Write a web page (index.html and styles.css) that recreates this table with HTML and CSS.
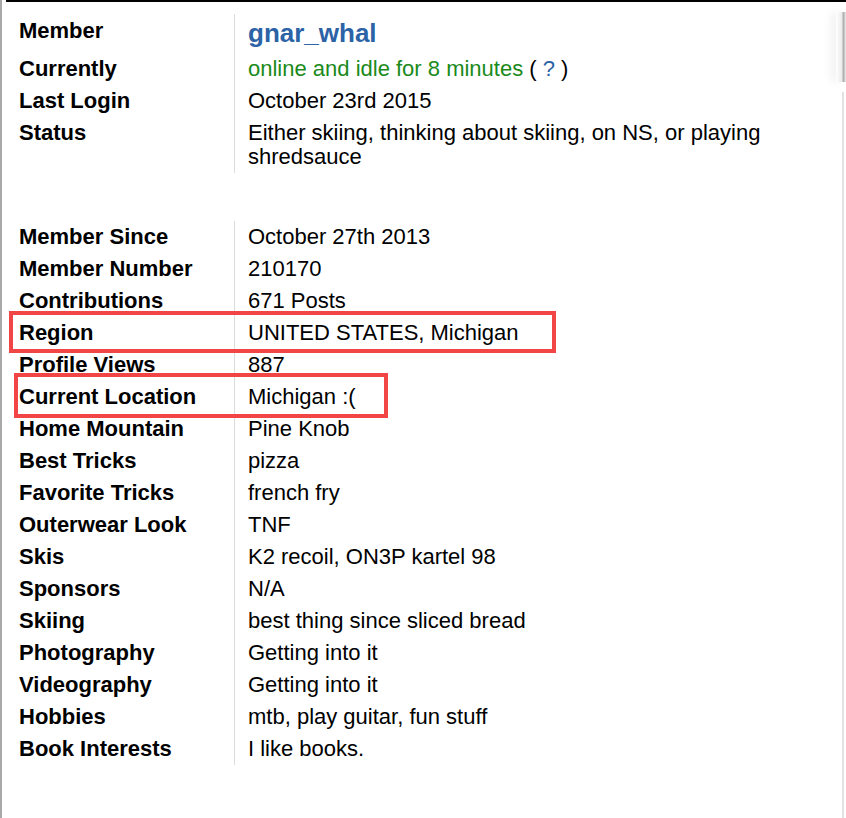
FILE: index.html
```html
<!DOCTYPE html>
<html>
<head>
<meta charset="utf-8">
<link rel="stylesheet" href="styles.css">
</head>
<body>
<div class="page">
  <div class="topbar"></div>
  <div class="profile">
    <table class="info">
      <tr class="member-row">
        <td class="label">Member</td>
        <td class="value"><a class="username">gnar_whal</a></td>
      </tr>
      <tr>
        <td class="label">Currently</td>
        <td class="value"><span class="online">online and idle for 8 minutes</span> ( <a class="help">?</a> )</td>
      </tr>
      <tr>
        <td class="label">Last Login</td>
        <td class="value">October 23rd 2015</td>
      </tr>
      <tr>
        <td class="label">Status</td>
        <td class="value">Either skiing, thinking about skiing, on NS, or playing<br>shredsauce</td>
      </tr>
    </table>
    <table class="info details">
      <tr><td class="label">Member Since</td><td class="value">October 27th 2013</td></tr>
      <tr><td class="label">Member Number</td><td class="value">210170</td></tr>
      <tr><td class="label">Contributions</td><td class="value">671 Posts</td></tr>
      <tr><td class="label">Region</td><td class="value">UNITED STATES, Michigan</td></tr>
      <tr><td class="label">Profile Views</td><td class="value">887</td></tr>
      <tr><td class="label">Current Location</td><td class="value">Michigan :(</td></tr>
      <tr><td class="label">Home Mountain</td><td class="value">Pine Knob</td></tr>
      <tr><td class="label">Best Tricks</td><td class="value">pizza</td></tr>
      <tr><td class="label">Favorite Tricks</td><td class="value">french fry</td></tr>
      <tr><td class="label">Outerwear Look</td><td class="value">TNF</td></tr>
      <tr><td class="label">Skis</td><td class="value">K2 recoil, ON3P kartel 98</td></tr>
      <tr><td class="label">Sponsors</td><td class="value">N/A</td></tr>
      <tr><td class="label">Skiing</td><td class="value">best thing since sliced bread</td></tr>
      <tr><td class="label">Photography</td><td class="value">Getting into it</td></tr>
      <tr><td class="label">Videography</td><td class="value">Getting into it</td></tr>
      <tr><td class="label">Hobbies</td><td class="value">mtb, play guitar, fun stuff</td></tr>
      <tr><td class="label">Book Interests</td><td class="value">I like books.</td></tr>
    </table>
  </div>
  <div class="highlight highlight-region"></div>
  <div class="highlight highlight-location"></div>
  <div class="edge-tab"></div>
  <div class="edge-line"></div>
</div>
</body>
</html>
```

FILE: styles.css
```css
html, body {
  margin: 0;
  padding: 0;
  background: #fff;
}

.page {
  position: relative;
  height: 818px;
  overflow: hidden;
  border-left: 2px solid #a9a9a9;
  font-family: "Liberation Sans", Arial, Helvetica, sans-serif;
  font-size: 22px;
  color: #000;
}

.topbar {
  height: 2px;
  margin-left: 4px;
  background: #000;
}

.profile {
  padding-top: 12px;
}

.info {
  border-collapse: collapse;
  border-spacing: 0;
}

.info td {
  padding: 4px 0;
  line-height: 24px;
  vertical-align: top;
}

.info .label {
  width: 215px;
  padding-left: 17px;
  font-weight: bold;
}

.info .value {
  border-left: 1px solid #dcdcdc;
  padding-left: 13px;
}

.member-row td {
  padding-top: 5px;
  padding-bottom: 4px;
}

.member-row .value {
  line-height: 29px;
}

.username {
  color: #2b63a6;
  font-weight: bold;
  font-size: 26px;
}

.online {
  color: #1a8a1a;
}

.help {
  color: #2b63a6;
}

.details {
  margin-top: 48px;
}

.highlight {
  position: absolute;
  border: 4px solid #f24545;
  box-sizing: border-box;
}

.highlight-region {
  left: 7px;
  top: 311px;
  width: 547px;
  height: 42px;
}

.highlight-location {
  left: 12px;
  top: 373px;
  width: 374px;
  height: 45px;
}

.edge-tab {
  position: absolute;
  right: 0;
  top: 12px;
  width: 10px;
  height: 70px;
  background: linear-gradient(to right, #ffffff, #ececec 55%, #b0b0b0 75%, #ededed);
  box-shadow: -5px 0 10px rgba(0, 0, 0, 0.06);
}

.edge-line {
  position: absolute;
  right: 2px;
  top: 92px;
  bottom: 0;
  width: 2px;
  background: #e2e2e2;
}
```
